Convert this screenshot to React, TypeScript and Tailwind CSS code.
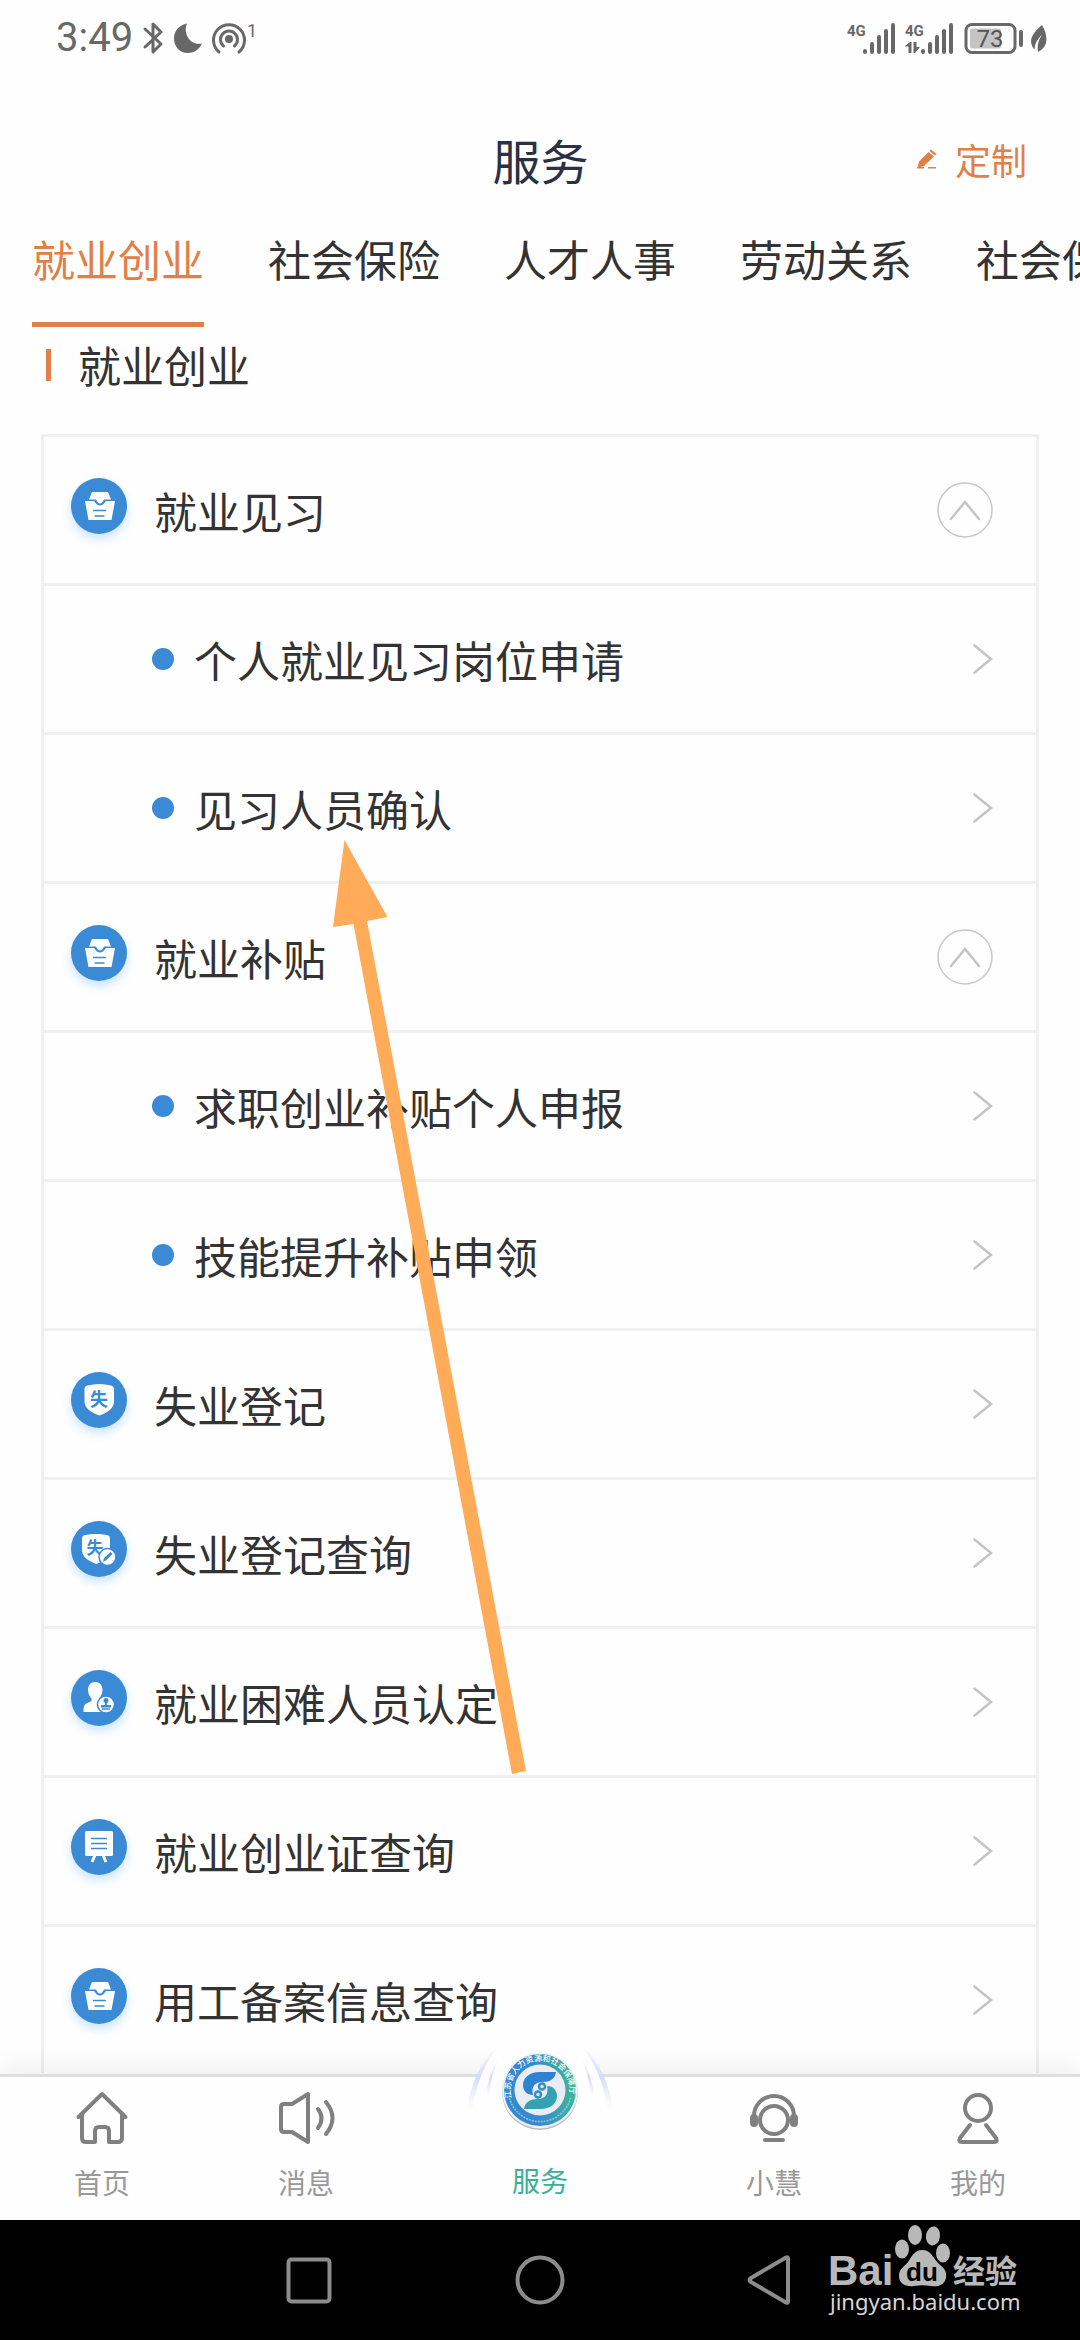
import { useState } from "react";
import type { ReactNode } from "react";

interface IService {
  name: string;
  icon: ReactNode;
  children?: string[];
}

function BoxGlyph() {
  return (
    <>
      <path d="M21 14h16l3 7.500h-6.500c-1.500 0-1.500 4-4.500 4s-3-4-4.500-4h-6.500z" fill="#fff" />
      <path d="M14 23h8.500c2 0 2 4.500 6.500 4.500s4.500-4.500 6.500-4.500h8.500l-3.500 19h-23z" fill="#fff" />
      <path d="M22 32.500h13M23.500 38h10" stroke="#3a8ad6" strokeWidth="1.500" />
    </>
  );
}

function ShieldGlyph() {
  return (
    <>
      <path
        d="M28.500 12c4 0 8 1 11.500 1.500q3 .5 3 3.500v12c0 7-5 11-14.500 14.500C19 40 13.500 36 13.500 29V17q0-3 3-3.500c4-.5 8-1.500 12-1.500z"
        fill="#fff"
      />
      <text
        x="28"
        y="34"
        textAnchor="middle"
        fontSize="18"
        fontWeight="700"
        fill="#3a8ad6"
        fontFamily="'Noto Sans CJK SC', sans-serif"
      >
        失
      </text>
    </>
  );
}

function ShieldEditGlyph() {
  return (
    <>
      <path
        d="M25 13c4 0 8 .5 11 1q3 .5 3 3.500v11c0 7-5 11-14 14.500C16 39 11 36 11 28.500v-11q0-3 3-3.500c3-.5 7-1 11-1z"
        fill="#fff"
      />
      <text
        x="24"
        y="33"
        textAnchor="middle"
        fontSize="17"
        fontWeight="700"
        fill="#3a8ad6"
        fontFamily="'Noto Sans CJK SC', sans-serif"
      >
        失
      </text>
      <circle cx="36.500" cy="36" r="8.500" fill="#fff" stroke="#3a8ad6" strokeWidth="1.500" />
      <path d="M32 40.500l1-3.500 6.500-6 2 2-6.500 6.500z" fill="#3a8ad6" />
    </>
  );
}

function PersonGlyph() {
  return (
    <>
      <path
        d="M24 12c5 0 7.500 3.500 7.500 8 0 3.500-1.500 6.500-3.500 8.500v2.500l6 3v8H12.500c0-6 1-8 4-9l4-2v-2.500c-2-2-3.500-5-3.500-8.500 0-4.500 2.500-8 7-8z"
        fill="#fff"
      />
      <circle cx="35" cy="34.500" r="8.500" fill="#fff" stroke="#3a8ad6" strokeWidth="1.500" />
      <circle cx="35" cy="30.500" r="2.500" fill="#3a8ad6" />
      <path d="M34 32h2v3h4v2.500H30V35h4z" fill="#3a8ad6" />
      <path d="M31 39h8" stroke="#3a8ad6" strokeWidth="1.500" />
    </>
  );
}

function BoardGlyph() {
  return (
    <>
      <rect x="14" y="12" width="28" height="25" rx="1.500" fill="#fff" />
      <path d="M20 19.500h16M20 24.500h16M20 29.500h16" stroke="#3a8ad6" strokeWidth="1.500" />
      <path d="M24 36l-3 7M32 36l3 7" stroke="#fff" strokeWidth="3" />
    </>
  );
}

const services: IService[] = [
  {
    name: "就业见习",
    icon: <BoxGlyph />,
    children: ["个人就业见习岗位申请", "见习人员确认"],
  },
  {
    name: "就业补贴",
    icon: <BoxGlyph />,
    children: ["求职创业补贴个人申报", "技能提升补贴申领"],
  },
  { name: "失业登记", icon: <ShieldGlyph /> },
  { name: "失业登记查询", icon: <ShieldEditGlyph /> },
  { name: "就业困难人员认定", icon: <PersonGlyph /> },
  { name: "就业创业证查询", icon: <BoardGlyph /> },
  { name: "用工备案信息查询", icon: <BoxGlyph /> },
];

const tabs = ["就业创业", "社会保险", "人才人事", "劳动关系", "社会保障卡"];

function ServiceIcon({ children }: { children: ReactNode }) {
  return (
    <svg
      viewBox="0 0 56 56"
      className="-mt-2 h-14 w-14 shrink-0 rounded-full bg-[#3a8ad6] shadow-[0_5px_10px_rgba(80,170,255,0.3)]"
      aria-hidden="true"
    >
      {children}
    </svg>
  );
}

function ChevronRight() {
  return (
    <svg viewBox="0 0 20 30" className="ml-auto h-[30px] w-5 shrink-0" fill="none" aria-hidden="true">
      <path d="M1.500 1.500L18 15 1.500 28.500" stroke="#c4c4c4" strokeWidth="2.500" strokeLinecap="round" />
    </svg>
  );
}

function CollapseIcon() {
  return (
    <svg viewBox="0 0 56 56" className="ml-auto h-14 w-14 shrink-0" fill="none" aria-hidden="true">
      <circle cx="28" cy="28" r="27" stroke="#c8c8c8" strokeWidth="1.500" />
      <path d="M14 37l14-17 14 17" stroke="#c4c4c4" strokeWidth="2.500" strokeLinecap="round" />
    </svg>
  );
}

function ServiceGroup({ service }: { service: IService }) {
  const [open, setOpen] = useState(true);

  return (
    <li className="border-b-[3px] border-[#f0f0f0] last:border-b-0">
      <button
        type="button"
        onClick={() => setOpen(!open)}
        className="flex h-[146px] w-full items-center gap-[27px] pr-[43px] pl-[27px] text-left"
      >
        <ServiceIcon>{service.icon}</ServiceIcon>
        <span>{service.name}</span>
        {service.children ? <CollapseIcon /> : <ChevronRight />}
      </button>
      {service.children && open && (
        <ul>
          {service.children.map((child) => (
            <li key={child} className="border-t-[3px] border-[#f0f0f0]">
              <button
                type="button"
                className="flex h-[146px] w-full items-center gap-5 pr-[43px] pl-[108px] text-left"
              >
                <span className="h-[22px] w-[22px] shrink-0 rounded-full bg-[#3a8ad6]" />
                <span>{child}</span>
                <ChevronRight />
              </button>
            </li>
          ))}
        </ul>
      )}
    </li>
  );
}

function Signal({ data }: { data?: boolean }) {
  return (
    <svg viewBox="0 0 50 32" className="h-8 w-[50px]" fill="none" aria-hidden="true">
      <text x="0" y="14" fontSize="15" fontWeight="700" fill="#686868" fontFamily="'Roboto', sans-serif">
        4G
      </text>
      {data && <path d="M0 24l5-4h1.500v11h-3v-6.500H0zM8.500 20h3v5H15l-5 6H8.500z" fill="#686868" />}
      <path
        d="M18 29v1M25 22v8M32 15v15M39 9v21M46 3v27"
        stroke="#686868"
        strokeWidth="4"
        strokeLinecap="round"
      />
    </svg>
  );
}

function StatusBar() {
  return (
    <div className="flex h-[76px] items-center justify-between pr-[33px] pl-14 text-[#686868]">
      <div className="flex items-center">
        <span className="w-[87px] font-[Roboto,sans-serif] text-[40px] leading-8">3:49</span>
        <svg viewBox="0 0 120 32" className="h-8 w-[120px] overflow-visible" fill="none" aria-hidden="true">
          <path
            d="M2 7l16 15-8 8V2l8 8L2 25"
            stroke="#686868"
            strokeWidth="3"
            strokeLinecap="round"
            strokeLinejoin="round"
          />
          <path d="M44 1.500C40 10 46 24 59 21.500 56 28 50.500 31 45 31c-8 0-14-6-14-14.500C31 9 36 3 44 1.500z" fill="#686868" />
          <circle cx="86" cy="17" r="4" fill="#686868" />
          <path
            d="M80.500 24a8.500 8.500 0 1 1 11 0M76 30a15.500 15.500 0 1 1 20 0"
            stroke="#686868"
            strokeWidth="3"
            strokeLinecap="round"
          />
          <text x="104" y="15" fontSize="18" fill="#686868" fontFamily="'Roboto', sans-serif">
            1
          </text>
        </svg>
      </div>
      <div className="flex items-center">
        <div className="flex gap-2">
          <Signal />
          <Signal data />
        </div>
        <svg viewBox="0 0 84 32" className="ml-2 h-8 w-[84px]" fill="none" aria-hidden="true">
          <rect x="3" y="2.500" width="49" height="28" rx="6" stroke="#686868" strokeWidth="3" />
          <rect x="7" y="6.500" width="31" height="20" rx="2" fill="#c4c4c4" />
          <text
            x="27"
            y="25"
            textAnchor="middle"
            fontSize="24"
            fill="#555"
            fontFamily="'Roboto', sans-serif"
          >
            73
          </text>
          <path d="M58 10v13" stroke="#686868" strokeWidth="4" strokeLinecap="round" />
          <path d="M79 3c6 10 7 22-4 27-1-6 0-11 4-17-5 4-7 9-7.500 14.500C65 20 68 12 79 3z" fill="#686868" />
        </svg>
      </div>
    </div>
  );
}

// Round seal with the raised arcs on both sides of it
function SealLogo() {
  return (
    <svg viewBox="0 0 160 90" className="h-[90px] w-40" fill="none" aria-hidden="true">
      <defs>
        <linearGradient id="ring" x1="0" x2="1" y1="0.300" y2="0.200">
          <stop offset="0.400" stopColor="#3589cf" />
          <stop offset="1" stopColor="#3fbb8e" />
        </linearGradient>
        <linearGradient id="arc" x1="0" x2="0" y1="0" y2="1">
          <stop offset="0" stopColor="#d6def6" stopOpacity="0" />
          <stop offset="0.500" stopColor="#d3dcf6" />
          <stop offset="1" stopColor="#e6ecfb" stopOpacity="0" />
        </linearGradient>
        <path id="sealText" d="M51.500 54a29.500 29.500 0 1 1 57 0" />
      </defs>
      <path d="M38 2Q80-4 122 2L148 44v46H12V44z" fill="#fefefe" />
      <path d="M38 2Q13 24 7 66l6-3Q18 28 38 2zM122 2q25 22 31 64l-6-3Q142 28 122 2z" fill="url(#arc)" />
      <path d="M39 14Q27 32 26 54l4-5q1-20 9-35zM121 14q12 18 13 40l-4-5q-1-20-9-35z" fill="url(#arc)" />
      <circle cx="80" cy="48" r="38" fill="#b9b9bd" />
      <circle cx="80" cy="46.500" r="38" fill="#f0f0f3" />
      <circle cx="80" cy="46" r="36" fill="url(#ring)" />
      <circle cx="80" cy="46" r="25.500" fill="#e9ecf2" />
      <path d="M49.500 54a31.500 31.500 0 0 0 61 0" stroke="#8cc4e8" strokeWidth="1.500" strokeDasharray="2 1" />
      <text fontSize="8" fontWeight="500" fill="#fff" fontFamily="'Noto Sans CJK SC', sans-serif">
        <textPath href="#sealText">江苏省人力资源和社会保障厅</textPath>
      </text>
      <path d="M96 28H80c-11 0-17 6-17 13 0 6 4 10 10 10-2-8 2-13 9-13 8 0 13-3 14-10z" fill="#3083cf" />
      <path d="M64 65h16c11 0 17-6 17-13 0-6-4-10-10-10 2 8-2 13-9 13-8 0-13 3-14 10z" fill="#35a2b4" />
      <circle cx="82" cy="42.500" r="3" stroke="#3390c4" strokeWidth="2.500" />
      <circle cx="78" cy="50.500" r="3" stroke="#3390c4" strokeWidth="2.500" />
    </svg>
  );
}

function NavItem({ label, children }: { label: string; children: ReactNode }) {
  return (
    <a href="#" className="flex flex-1 flex-col items-center gap-5 text-[28px] leading-9 text-[#999]">
      <svg
        viewBox="0 0 52 52"
        className="h-[52px] w-[52px] overflow-visible"
        fill="none"
        stroke="#808080"
        strokeWidth="4"
        strokeLinecap="round"
        strokeLinejoin="round"
        aria-hidden="true"
      >
        {children}
      </svg>
      {label}
    </a>
  );
}

function BottomNav() {
  return (
    <nav className="relative flex border-t-[3px] border-[#dedede] bg-[#fefefe] pt-[15px] pb-5 shadow-[0_-8px_24px_rgba(0,0,0,0.06)]">
      <NavItem label="首页">
        <path d="M2.500 25L26 2l23.500 23M6 23v23q0 4 4 4h9V39q0-4 4-4h6q4 0 4 4v11h9q4 0 4-4V23" />
      </NavItem>
      <NavItem label="消息">
        <path d="M1 15q0-3 3-3h8L28 2v48L12 40H4q-3 0-3-3zM38 17q7 9 0 19M46 10q13 16 0 32" />
      </NavItem>
      <a
        href="#"
        aria-current="page"
        className="flex w-[264px] flex-col items-center pt-[70px] text-[28px] leading-9 text-[#3fae98]"
      >
        <span className="absolute -top-[33px]">
          <SealLogo />
        </span>
        服务
      </a>
      <NavItem label="小慧">
        <circle cx="26" cy="28" r="14" />
        <path d="M6 24a20 20 0 0 1 40 0M17 48h18" />
        <rect x="4" y="24" width="4" height="9" rx="2" />
        <rect x="44" y="24" width="4" height="9" rx="2" />
      </NavItem>
      <NavItem label="我的">
        <circle cx="26" cy="16" r="13" />
        <path d="M18 33L8 46q-2 4 2 4h32q4 0 2-4L34 33" />
      </NavItem>
    </nav>
  );
}

function SystemBar() {
  return (
    <div className="relative flex h-[120px] items-center justify-center gap-[180px] bg-black">
      <button type="button" aria-label="最近任务">
        <svg viewBox="0 0 50 50" className="h-[50px] w-[50px]" fill="none" aria-hidden="true">
          <rect x="3.500" y="4.500" width="41" height="42" rx="3" stroke="#8c8c8c" strokeWidth="4" />
        </svg>
      </button>
      <button type="button" aria-label="主屏幕">
        <svg viewBox="0 0 50 50" className="h-[50px] w-[50px]" fill="none" aria-hidden="true">
          <circle cx="25" cy="25" r="22.500" stroke="#8c8c8c" strokeWidth="4" />
        </svg>
      </button>
      <button type="button" aria-label="返回">
        <svg viewBox="0 0 50 50" className="h-[50px] w-[50px]" fill="none" aria-hidden="true">
          <path
            d="M43 3.500v43q0 2-2 1L6 27q-3-2 0-4L41 2.500q2-1 2 1z"
            stroke="#8c8c8c"
            strokeWidth="4"
            strokeLinejoin="round"
          />
        </svg>
      </button>
      <svg
        viewBox="0 0 204 100"
        className="absolute top-0 right-[52px] h-[100px] w-[204px]"
        fill="#b8b8b8"
        role="img"
        aria-label="Baidu 经验"
      >
        <text x="4" y="65" fontSize="42" fontWeight="700" fontFamily="'Liberation Sans', sans-serif">
          Bai
        </text>
        <ellipse cx="78" cy="29" rx="7" ry="9.500" />
        <ellipse cx="91" cy="15" rx="7" ry="10" />
        <ellipse cx="109" cy="16" rx="7" ry="9.500" transform="rotate(8 109 16)" />
        <ellipse cx="119" cy="33" rx="7" ry="9.500" />
        <path d="M98 30c9 0 11 8 17 14 5 4 8 7 7 14-2 8-9 9-15 8-6-1-11-1-17 0-8 1-15-2-15-10 0-7 5-9 9-14 4-6 7-12 14-12z" />
        <text
          x="98"
          y="61"
          textAnchor="middle"
          fontSize="26"
          fontWeight="700"
          fill="#000"
          fontFamily="'Liberation Sans', sans-serif"
        >
          du
        </text>
        <text x="129" y="63" fontSize="32" fontWeight="700" fontFamily="'Noto Sans CJK SC', sans-serif">
          经验
        </text>
        <text x="6" y="90" fontSize="22" fill="#d6d6d6" fontFamily="'Noto Sans', sans-serif">
          jingyan.baidu.com
        </text>
      </svg>
    </div>
  );
}

export default function App() {
  const [activeTab, setActiveTab] = useState(0);

  return (
    <div className="relative flex min-h-screen flex-col overflow-hidden bg-[#fefefe] font-['Noto_Sans_CJK_SC',sans-serif] text-[43px] text-[#333]">
      <StatusBar />
      <header className="grid h-[150px] grid-cols-3 items-center pt-[15px] pr-[53px]">
        <h1 className="col-start-2 pl-[54px] text-center text-[48px] leading-none text-[#2b3044]">服务</h1>
        <button type="button" className="flex items-center justify-self-end gap-[18px] text-[36px] leading-none text-[#e07f47]">
          <svg viewBox="0 0 20 20" className="h-5 w-5" fill="#e07f47" aria-hidden="true">
            <path d="M14 0.500l5.500 4.500L18 6.500 12.500 2zM11.500 3l5.500 4.500L7 17l-5.500 1.500L1 17l1-4.500zM0 18h7v1.500H0zM11 18h8v1.500h-8z" />
          </svg>
          定制
        </button>
      </header>

      <div role="tablist" className="flex gap-16 overflow-hidden pl-8 leading-[64px] whitespace-nowrap">
        {tabs.map((tab, index) => (
          <button
            key={tab}
            type="button"
            role="tab"
            aria-selected={index === activeTab}
            onClick={() => setActiveTab(index)}
            className={
              index === activeTab
                ? "shrink-0 border-b-[5px] border-[#e07f47] pb-8 text-[#e07f47]"
                : "shrink-0 border-b-[5px] border-transparent pb-8"
            }
          >
            {tab}
          </button>
        ))}
      </div>

      <main className="flex-1 px-[41px] pb-px">
        <h2 className="mb-8 flex h-[75px] items-center gap-[27px] pl-[5px]">
          <span className="h-8 w-[5px] bg-[#e07f47]" />
          就业创业
        </h2>
        <ul className="border-x-[3px] border-t-[3px] border-[#f0f0f0]">
          {services.map((service) => (
            <ServiceGroup key={service.name} service={service} />
          ))}
        </ul>
      </main>

      <BottomNav />
      <SystemBar />

      {/* Pointer to the internship confirmation entry */}
      <svg
        viewBox="0 0 200 940"
        className="pointer-events-none absolute top-[838px] left-[330px] h-[940px] w-[200px]"
        aria-hidden="true"
      >
        <path d="M14.500 2L57.500 79l-20.500 4 159 850-14 3L23.500 86 3 89z" fill="#ffab57" />
      </svg>
    </div>
  );
}
